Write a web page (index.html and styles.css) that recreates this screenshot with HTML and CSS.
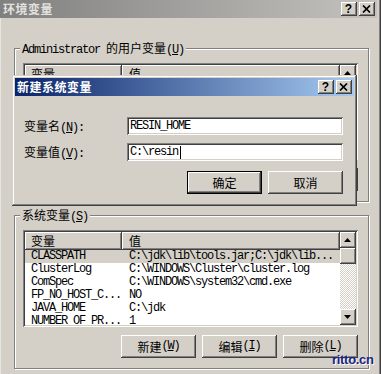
FILE: index.html
```html
<!DOCTYPE html>
<html>
<head>
<meta charset="utf-8">
<title>环境变量</title>
<link rel="stylesheet" href="styles.css">
</head>
<body>
<div class="window">
  <div class="titlebar">
    <span class="title">环境变量</span>
    <div class="caps">
      <span class="cap help">?</span>
      <span class="cap close"><svg width="9" height="8" viewBox="0 0 9 8"><path d="M1 0.5 L8 7.5 M8 0.5 L1 7.5" stroke="#000" stroke-width="1.7" fill="none"/></svg></span>
    </div>
  </div>
  <div class="client">
    <fieldset class="group">
      <legend><span class="l">Administrator </span>的用户变量<span class="l">(<u>U</u>)</span></legend>
      <div class="listview">
        <div class="lv-main">
          <div class="lv-header"><span class="h h1">变量</span><span class="h h2">值</span></div>
        </div>
        <div class="scrollbar">
          <span class="sb-btn"><svg width="7" height="4" viewBox="0 0 7 4"><path d="M3.5 0 L7 4 L0 4 Z" fill="#000"/></svg></span>
          <span class="sb-track"></span>
          <span class="sb-btn"><svg width="7" height="4" viewBox="0 0 7 4"><path d="M0 0 L7 0 L3.5 4 Z" fill="#000"/></svg></span>
        </div>
      </div>
      <div class="btnrow">
        <span class="btn"></span>
        <span class="btn"></span>
        <span class="btn"></span>
      </div>
    </fieldset>

    <fieldset class="group sys">
      <legend>系统变量<span class="l">(<u>S</u>)</span></legend>
      <div class="listview">
        <div class="lv-main">
          <div class="lv-header"><span class="h h1">变量</span><span class="h h2">值</span></div>
          <div class="row sel l"><span class="c1">CLASSPATH</span><span class="c2">C:\jdk\lib\tools.jar;C:\jdk\lib...</span></div>
          <div class="row l"><span class="c1">ClusterLog</span><span class="c2">C:\WINDOWS\Cluster\cluster.log</span></div>
          <div class="row l"><span class="c1">ComSpec</span><span class="c2">C:\WINDOWS\system32\cmd.exe</span></div>
          <div class="row l"><span class="c1">FP_NO_HOST_C...</span><span class="c2">NO</span></div>
          <div class="row l"><span class="c1">JAVA_HOME</span><span class="c2">C:\jdk</span></div>
          <div class="row l"><span class="c1">NUMBER_OF_PR...</span><span class="c2">1</span></div>
        </div>
        <div class="scrollbar">
          <span class="sb-btn"><svg width="7" height="4" viewBox="0 0 7 4"><path d="M3.5 0 L7 4 L0 4 Z" fill="#000"/></svg></span>
          <span class="sb-track"><span class="sb-thumb"></span></span>
          <span class="sb-btn"><svg width="7" height="4" viewBox="0 0 7 4"><path d="M0 0 L7 0 L3.5 4 Z" fill="#000"/></svg></span>
        </div>
      </div>
      <div class="btnrow">
        <span class="btn">新建<span class="l">(<u>W</u>)</span></span>
        <span class="btn">编辑<span class="l">(<u>I</u>)</span></span>
        <span class="btn">删除<span class="l">(<u>L</u>)</span></span>
      </div>
    </fieldset>
  </div>

  <div class="dialog">
    <div class="dtitle">
      <span class="title">新建系统变量</span>
      <div class="caps">
        <span class="cap help">?</span>
        <span class="cap close"><svg width="9" height="8" viewBox="0 0 9 8"><path d="M1 0.5 L8 7.5 M8 0.5 L1 7.5" stroke="#000" stroke-width="1.7" fill="none"/></svg></span>
      </div>
    </div>
    <div class="dbody">
      <span class="lbl">变量名<span class="l">(<u>N</u>):</span></span>
      <span class="edit l">RESIN_HOME</span>
      <span class="lbl">变量值<span class="l">(<u>V</u>):</span></span>
      <span class="edit l">C:\resin<span class="caret"></span></span>
      <div class="dbtns">
        <span class="btn default">确定</span>
        <span class="btn">取消</span>
      </div>
    </div>
  </div>

  <span class="watermark">ritto.cn</span>
</div>
</body>
</html>
```
FILE: styles.css
```css
* { box-sizing: border-box; }
html, body { margin: 0; padding: 0; }
body {
  width: 381px;
  height: 374px;
  overflow: hidden;
  background: #d4d0c8;
  font-family: "Noto Sans CJK SC", sans-serif;
  font-size: 12px;
  color: #000;
}
.l {
  font-family: "Liberation Mono", "Noto Sans CJK SC", monospace;
  font-size: 12px;
  letter-spacing: -1.2px;
}
u { text-decoration: underline; text-underline-offset: 1px; }

.window {
  position: relative;
  width: 381px;
  height: 374px;
  background: #d4d0c8;
  padding-right: 4px;
  display: flex;
  flex-direction: column;
  box-shadow: inset -1px 0 #404040, inset -2px 0 #808080, inset 1px 0 #e8e6e0;
}
.titlebar {
  height: 18px;
  flex: none;
  display: flex;
  align-items: center;
  padding-left: 3px;
  padding-right: 2px;
  background: linear-gradient(to right, #808080, #c4c2bd);
}
.title {
  font-weight: bold;
  font-size: 12px;
  line-height: 14px;
  color: #e4e2de;
  letter-spacing: 0.5px;
}
.caps { margin-left: auto; display: flex; gap: 2px; }
.cap {
  width: 16px;
  height: 14px;
  background: #d4d0c8;
  box-shadow: inset -1px -1px #404040, inset 1px 1px #fff, inset -2px -2px #808080;
  display: flex;
  align-items: center;
  justify-content: center;
  padding: 0 1px 1px 0;
}
.cap.help {
  font-family: "Liberation Sans", sans-serif;
  font-weight: bold;
  font-size: 12px;
  line-height: 12px;
}

.client {
  flex: 1;
  padding: 23px 8px 0 14px;
  display: flex;
  flex-direction: column;
  gap: 6px;
}
.group {
  margin: 0;
  min-width: 0;
  padding: 8px 10px 10px 8px;
  border: 1px solid #808080;
  box-shadow: inset 1px 1px #fff, 1px 1px #fff;
}
.group legend {
  padding: 0 2px;
  margin-left: -3px;
  height: 14px;
  line-height: 14px;
  background: #d4d0c8;
  white-space: nowrap;
}

.listview {
  height: 97px;
  padding: 2px;
  background: #fff;
  box-shadow: inset 1px 1px #808080, inset -1px -1px #fff, inset 2px 2px #404040, inset -2px -2px #d4d0c8;
  display: flex;
}
.lv-main {
  flex: 1;
  min-width: 0;
  overflow: hidden;
  display: flex;
  flex-direction: column;
}
.lv-header { display: flex; height: 18px; flex: none; }
.h {
  background: #d4d0c8;
  box-shadow: inset -1px -1px #404040, inset 1px 1px #fff, inset -2px -2px #808080;
  line-height: 18px;
  white-space: nowrap;
}
.h1 { width: 97px; padding-left: 6px; }
.h2 { flex: 1; padding-left: 7px; }
.row {
  display: flex;
  height: 13px;
  line-height: 13px;
  flex: none;
  white-space: nowrap;
}
.row.sel { background: #d4d0c8; }
.c1 { width: 97px; padding-left: 6px; overflow: hidden; }
.c2 { flex: 1; padding-left: 7px; overflow: hidden; }

.scrollbar {
  width: 16px;
  flex: none;
  display: flex;
  flex-direction: column;
}
.sb-btn {
  height: 16px;
  flex: none;
  background: #d4d0c8;
  box-shadow: inset -1px -1px #404040, inset 1px 1px #fff, inset -2px -2px #808080;
  display: flex;
  align-items: center;
  justify-content: center;
  padding: 0 1px 1px 0;
}
.sb-track {
  flex: 1;
  background: repeating-conic-gradient(#d4d0c8 0 25%, #fff 0 50%) 0 0 / 2px 2px;
  display: flex;
  flex-direction: column;
}
.sb-thumb {
  height: 16px;
  background: #d4d0c8;
  box-shadow: inset -1px -1px #404040, inset 1px 1px #fff, inset -2px -2px #808080;
}

.btnrow {
  display: flex;
  justify-content: flex-end;
  gap: 6px;
  margin-top: 8px;
}
.btn {
  width: 75px;
  height: 23px;
  display: flex;
  align-items: center;
  justify-content: center;
  background: #d4d0c8;
  box-shadow: inset -1px -1px #404040, inset 1px 1px #fff, inset -2px -2px #808080;
  white-space: nowrap;
  padding-bottom: 1px;
}
.btn.default {
  border: 1px solid #000;
  box-shadow: inset -1px -1px #404040, inset 1px 1px #fff, inset -2px -2px #808080;
}

.dialog {
  position: absolute;
  left: 12px;
  top: 75px;
  width: 345px;
  height: 131px;
  padding: 3px;
  background: #d4d0c8;
  box-shadow: inset -1px -1px #404040, inset 1px 1px #d4d0c8, inset -2px -2px #808080, inset 2px 2px #fff;
}
.dtitle {
  height: 18px;
  display: flex;
  align-items: center;
  padding: 0 2px 0 2px;
  background: linear-gradient(to right, #0a246a, #a6caf0);
}
.dtitle .title { color: #fff; letter-spacing: 0.5px; }
.dbody {
  display: grid;
  grid-template-columns: 103px 216px;
  row-gap: 8px;
  align-items: center;
  padding: 21px 11px 0 9px;
}
.lbl { white-space: nowrap; }
.edit {
  height: 18px;
  line-height: 14px;
  padding: 2px 3px;
  background: #fff;
  box-shadow: inset 1px 1px #808080, inset -1px -1px #fff, inset 2px 2px #404040, inset -2px -2px #d4d0c8;
  white-space: nowrap;
  display: flex;
  align-items: center;
}
.caret {
  display: inline-block;
  width: 1px;
  height: 13px;
  background: #000;
  margin-left: 2px;
}
.dbtns {
  grid-column: 1 / -1;
  display: flex;
  justify-content: flex-end;
  gap: 6px;
  margin-top: 2px;
}

.watermark {
  position: absolute;
  left: 332px;
  top: 352px;
  font-family: "Liberation Sans", sans-serif;
  font-weight: bold;
  font-size: 13px;
  letter-spacing: -0.3px;
  color: #1a2580;
  text-shadow: 1px 1px 0 #fff;
}
```
